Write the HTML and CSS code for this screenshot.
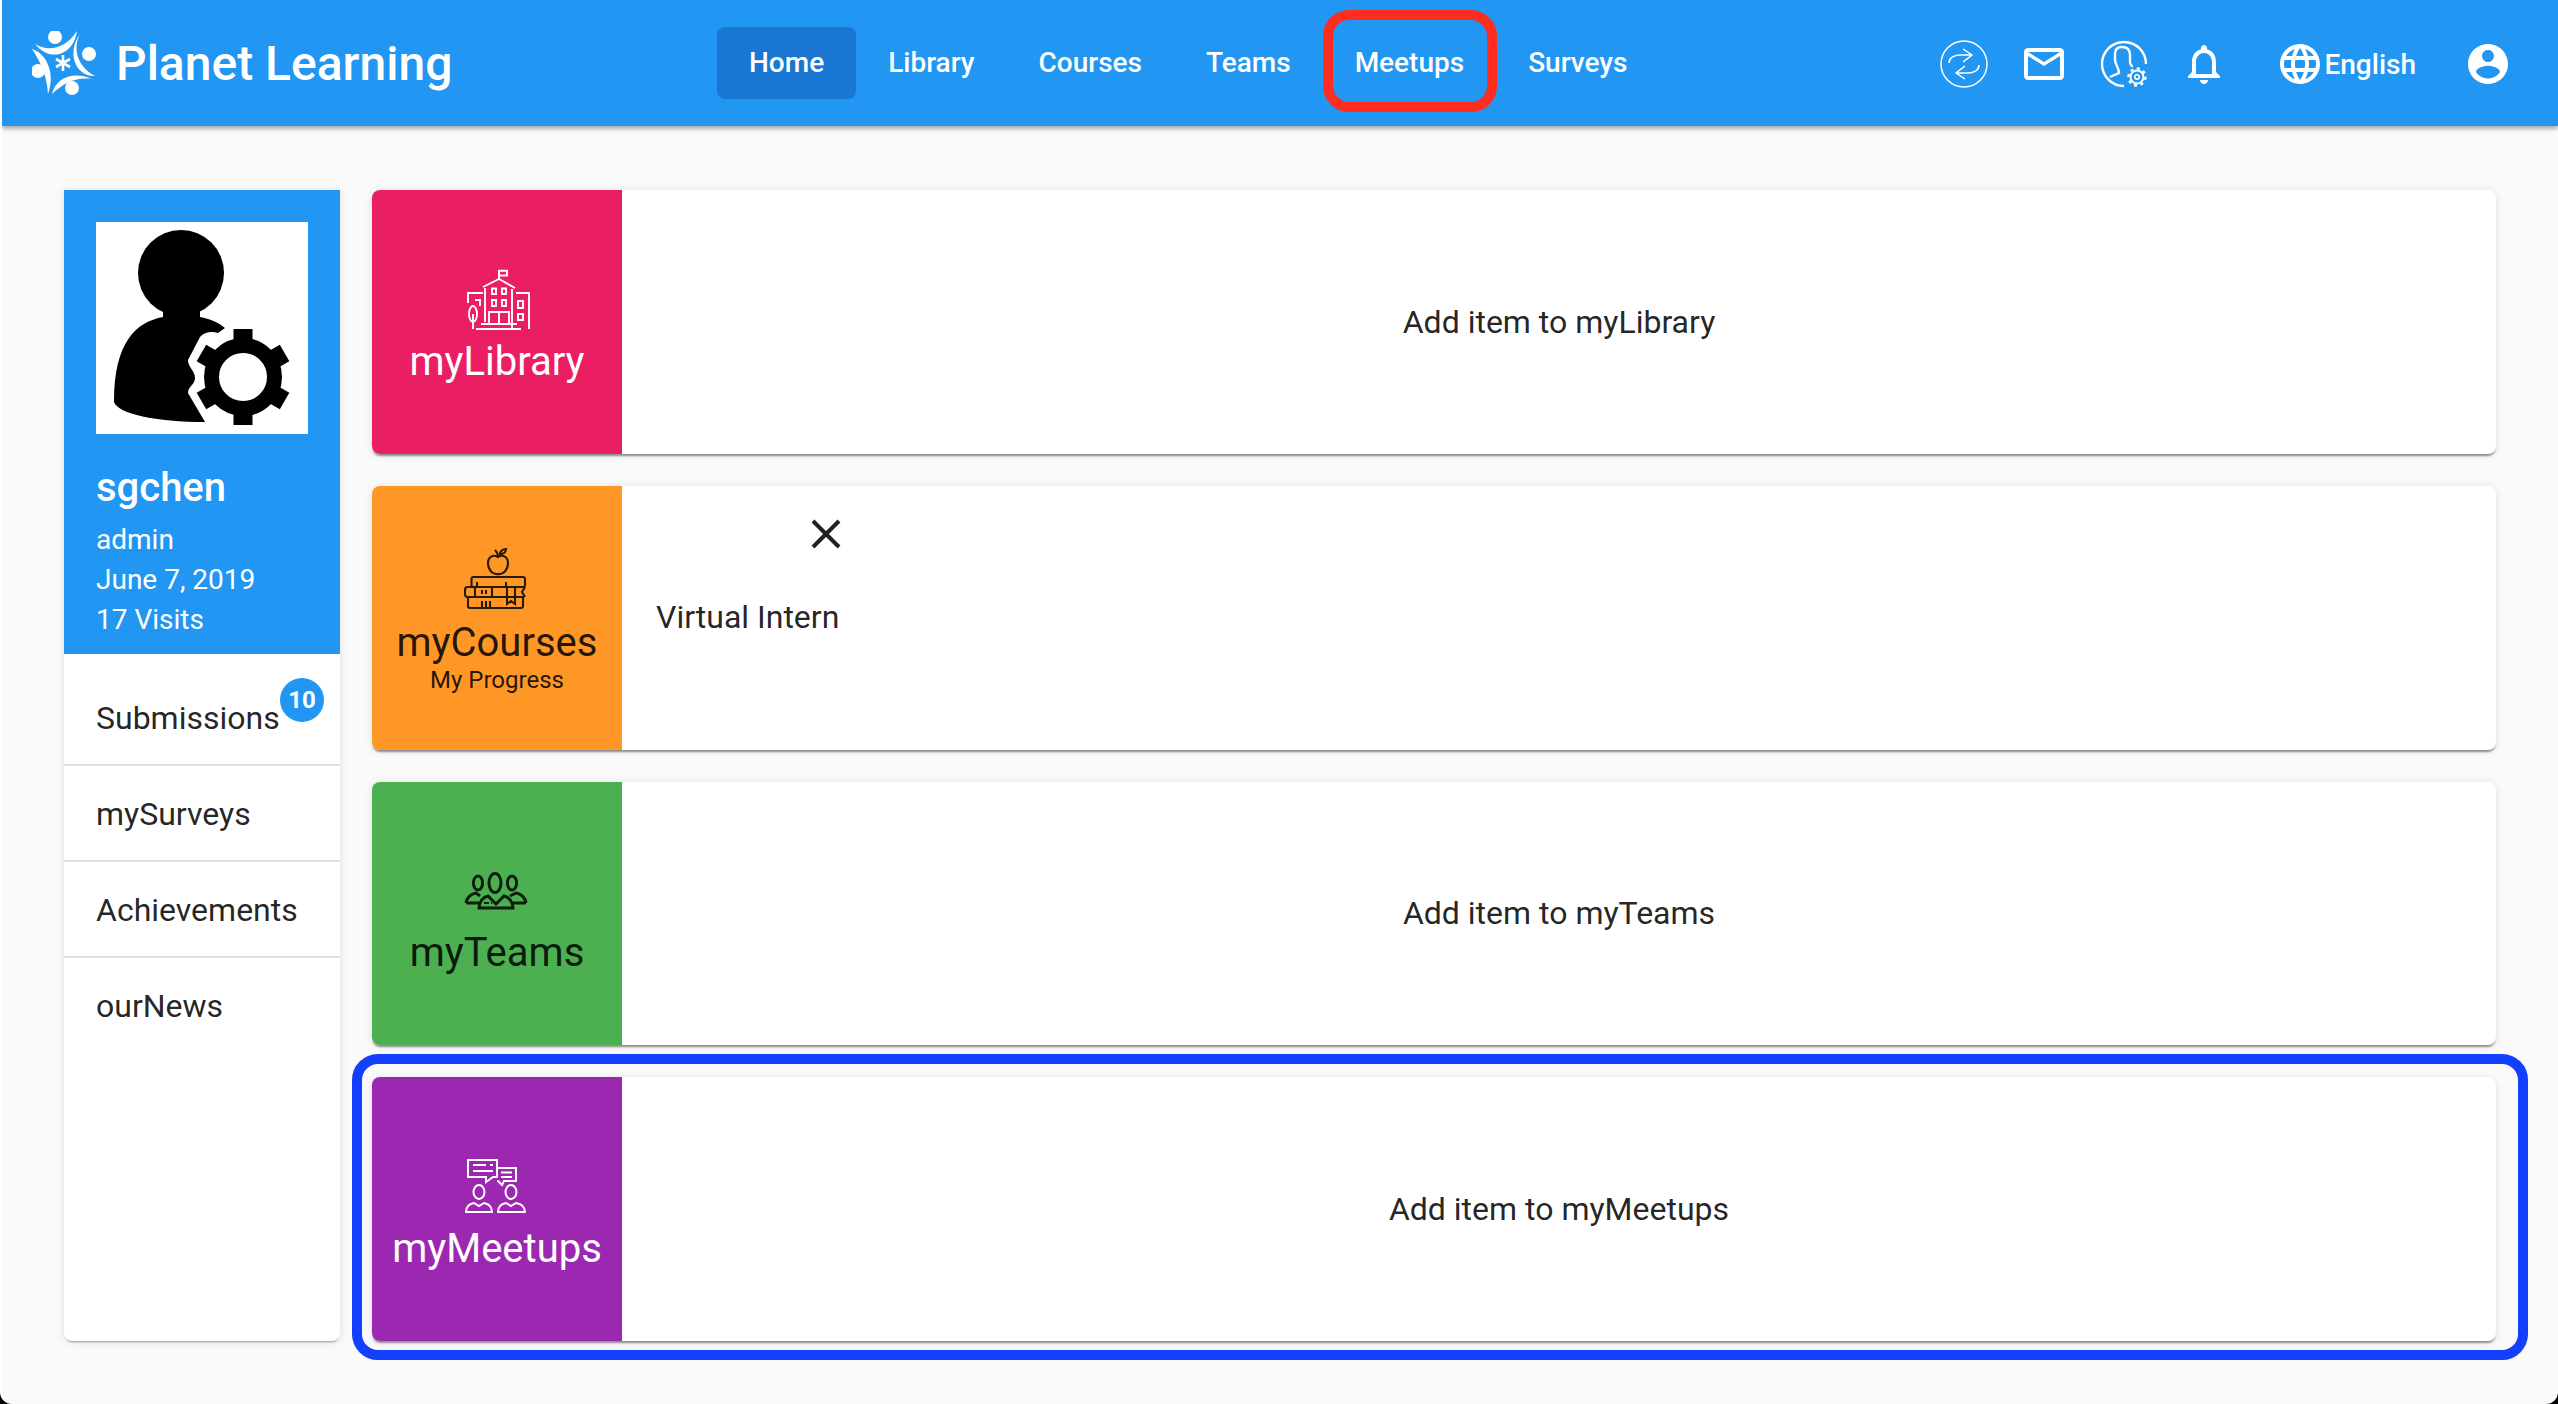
FILE: index.html
```html
<!DOCTYPE html>
<html lang="en">
<head>
  <meta charset="UTF-8">
  <title>Planet Learning</title>
  <link rel="stylesheet" href="styles.css">
</head>
<body>
<div class="page">
  <header class="toolbar">
    <div class="brand">
      <svg class="logo" viewBox="0 0 64 64" fill="#fff">
        <circle cx="23" cy="6" r="7"/><circle cx="57" cy="23" r="7"/><circle cx="6" cy="40" r="7"/><circle cx="40" cy="57" r="7"/>
        <path d="M3 13C14 20 32 20 45 0C42 24 18 32 3 13Z"/>
        <path d="M48 3C40 18 46 36 63 45C44 46 34 22 48 3Z"/>
        <path d="M20 63C24 46 42 40 60 48C44 46 32 52 20 63Z"/>
        <path d="M0 18C14 22 24 42 16 63C15 44 8 30 0 18Z"/>
        <path d="M31 24V40M24 28L38 36M24 36L38 28" stroke="#fff" stroke-width="2.6" fill="none"/>
      </svg>
      <span class="brand-name">Planet Learning</span>
    </div>
    <nav class="nav">
      <a class="nav-link active">Home</a>
      <a class="nav-link">Library</a>
      <a class="nav-link">Courses</a>
      <a class="nav-link">Teams</a>
      <a class="nav-link">Meetups</a>
      <a class="nav-link">Surveys</a>
    </nav>
    <div class="tools">
      <span class="tool">
        <svg class="tool-icon" viewBox="0 0 48 48" fill="none" stroke="#fff" stroke-width="1.5">
          <circle cx="24" cy="24" r="23"/>
          <path d="M9 23C9 18 14 15 20 15H32M23 9L32 15L23 22"/>
          <path d="M39 25C39 30 34 33 28 33H16M25 39L16 33L25 26"/>
        </svg>
      </span>
      <span class="tool">
        <svg class="tool-icon" viewBox="0 0 24 24" fill="#fff"><path d="M20 4H4c-1.1 0-2 .9-2 2v12c0 1.1.9 2 2 2h16c1.1 0 2-.9 2-2V6c0-1.1-.9-2-2-2zm0 14H4V8l8 5 8-5v10zm-8-7L4 6h16l-8 5z"/></svg>
      </span>
      <span class="tool">
        <svg class="tool-icon" viewBox="0 0 48 48" fill="none" stroke="#fff" stroke-width="2.4">
          <path d="M46 24A22 22 0 1 0 24 46"/>
          <path d="M10 37L19 33C19 28 15 24 15 20V14C15 9 18 7 22 7C27 7 30 10 30 15V22C30 25 32 25 32 27"/>
          <circle cx="37" cy="37" r="9" fill="#2196f3" stroke="none"/>
          <circle cx="37" cy="37" r="8.5" stroke-width="2.4" stroke-dasharray="3 3.6"/>
          <circle cx="37" cy="37" r="6.5" stroke-width="2"/>
          <circle cx="37" cy="37" r="2.2" stroke-width="1.6"/>
        </svg>
      </span>
      <span class="tool">
        <svg class="tool-icon" viewBox="0 0 24 24" fill="#fff"><path d="M12 22c1.1 0 2-.9 2-2h-4c0 1.1.89 2 2 2zm6-6v-5c0-3.07-1.64-5.64-4.5-6.32V4c0-.83-.67-1.5-1.5-1.5s-1.5.67-1.5 1.5v.68C7.63 5.36 6 7.92 6 11v5l-2 2v1h16v-1l-2-2zm-2 1H8v-6c0-2.48 1.51-4.5 4-4.5s4 2.02 4 4.5v6z"/></svg>
      </span>
      <span class="lang">
        <svg class="tool-icon" viewBox="0 0 24 24" fill="#fff"><path d="M11.99 2C6.47 2 2 6.48 2 12s4.47 10 9.99 10C17.52 22 22 17.52 22 12S17.52 2 11.99 2zm6.93 6h-2.95c-.32-1.25-.78-2.45-1.38-3.56 1.84.63 3.37 1.91 4.33 3.56zM12 4.04c.83 1.2 1.48 2.53 1.91 3.96h-3.82c.43-1.43 1.08-2.76 1.91-3.96zM4.26 14C4.1 13.36 4 12.69 4 12s.1-1.36.26-2h3.38c-.08.66-.14 1.32-.14 2 0 .68.06 1.34.14 2H4.26zm.82 2h2.95c.32 1.25.78 2.45 1.38 3.56-1.84-.63-3.37-1.9-4.33-3.56zm2.95-8H5.08c.96-1.66 2.49-2.93 4.33-3.56C8.81 5.55 8.35 6.75 8.03 8zM12 19.96c-.83-1.2-1.48-2.53-1.91-3.96h3.82c-.43 1.43-1.08 2.76-1.91 3.96zM14.34 14H9.66c-.09-.66-.16-1.32-.16-2 0-.68.07-1.35.16-2h4.68c.09.65.16 1.32.16 2 0 .68-.07 1.34-.16 2zm.25 5.56c.6-1.11 1.06-2.31 1.38-3.56h2.95c-.96 1.65-2.49 2.93-4.33 3.56zM16.36 14c.08-.66.14-1.32.14-2 0-.68-.06-1.34-.14-2h3.38c.16.64.26 1.31.26 2s-.1 1.36-.26 2h-3.38z"/></svg>
        <span>English</span>
      </span>
      <span class="tool">
        <svg class="tool-icon" viewBox="0 0 24 24" fill="#fff"><path d="M12 2C6.48 2 2 6.48 2 12s4.48 10 10 10 10-4.48 10-10S17.52 2 12 2zm0 3c1.66 0 3 1.34 3 3s-1.34 3-3 3-3-1.34-3-3 1.34-3 3-3zm0 14.2c-2.5 0-4.71-1.28-6-3.22.03-1.99 4-3.08 6-3.08 1.99 0 5.97 1.09 6 3.08-1.29 1.94-3.5 3.22-6 3.22z"/></svg>
      </span>
    </div>
  </header>

  <main class="content">
    <aside class="sidebar">
      <div class="profile">
        <svg class="avatar" viewBox="0 0 212 212">
          <circle cx="85" cy="51" r="43"/>
          <path d="M67 80H104V95C114 97 122 100 129 106L122 111C116 109 108 110 104 115L92 138C92 146 99 148 99 156C99 163 92 164 92 171L109 200C60 200 22 192 18 180C18 120 40 100 67 95Z"/>
          <g fill="none" stroke="#000">
            <circle cx="147" cy="155" r="31.5" stroke-width="15"/>
          </g>
          <g>
            <rect x="137.5" y="107" width="19" height="16"/>
            <rect x="137.5" y="107" width="19" height="16" transform="rotate(60 147 155)"/>
            <rect x="137.5" y="107" width="19" height="16" transform="rotate(120 147 155)"/>
            <rect x="137.5" y="107" width="19" height="16" transform="rotate(180 147 155)"/>
            <rect x="137.5" y="107" width="19" height="16" transform="rotate(240 147 155)"/>
            <rect x="137.5" y="107" width="19" height="16" transform="rotate(300 147 155)"/>
          </g>
        </svg>
        <div class="user-name">sgchen</div>
        <div class="user-info">admin</div>
        <div class="user-info">June 7, 2019</div>
        <div class="user-info">17 Visits</div>
      </div>
      <div class="side-item first">Submissions<span class="badge">10</span></div>
      <div class="side-item">mySurveys</div>
      <div class="side-item">Achievements</div>
      <div class="side-item last">ourNews</div>
    </aside>

    <section class="cards">
      <div class="card">
        <div class="panel pink">
          <svg class="panel-icon" viewBox="0 0 64 64" fill="none" stroke="#fff" stroke-width="1.9">
            <path d="M34 9V0.8H42V5.5H34M18 17L34 9L50 18M20 18V52M47 19V59M3 33V23H18M51 23H64V59"/>
            <path d="M27 18.5H31V24H27ZM37 18.5H41V24H37ZM27 30H31V36H27ZM37 30H41V36H37ZM53 31H58V38H53ZM53 44H58V50H53Z"/>
            <path d="M24 54V42H44V54M34 42V54M16 54H52M11 59H56"/>
            <ellipse cx="8" cy="44" rx="4" ry="8"/>
            <path d="M8 44V59M10 30H15V36"/>
          </svg>
          <div class="panel-title">myLibrary</div>
        </div>
        <div class="card-body center">Add item to myLibrary</div>
      </div>

      <div class="card">
        <div class="panel orange dark-text">
          <svg class="panel-icon books" viewBox="0 6 64 64" fill="none" stroke="#2a1a08" stroke-width="2.1">
            <path d="M33 12C28 9 23 12 23 18C23 25 28 30 33 29C38 30 43 25 43 18C43 12 38 9 33 12Z"/>
            <path d="M33 12C33 9 31 6 30 5M35 9C35 6 38 4 41 4C41 7 39 9 35 9Z"/>
            <rect x="6.5" y="32" width="53.5" height="10" rx="2"/>
            <path d="M56 42H2.5C1 42 0 43 0 45V49C0 51 1 52 2.5 52H56"/>
            <path d="M3 52V61C3 62 4 63 5 63H56C57 63 58 62 58 61V52H38M60 42L57 47L60 52"/>
            <path d="M42 42V59L46 56L50 59V42M12 37V42M41 37V42M10 42V52M27 42V52M17 45V49M21 45V49M17 56V63M21 56V63M25 56V63"/>
          </svg>
          <div class="panel-title">myCourses</div>
          <div class="panel-sub">My Progress</div>
        </div>
        <div class="card-body">
          <div class="course">
            <svg class="close" viewBox="0 0 48 48" fill="none" stroke="#212121" stroke-width="4"><path d="M11 11L37 37M37 11L11 37"/></svg>
            <div class="course-name">Virtual Intern</div>
          </div>
        </div>
      </div>

      <div class="card">
        <div class="panel green dark-text">
          <svg class="panel-icon" viewBox="0 0 64 64" fill="none" stroke="#0c1f0d" stroke-width="3">
            <ellipse cx="30" cy="22" rx="6" ry="9.5"/>
            <ellipse cx="13" cy="22" rx="4.6" ry="7"/>
            <ellipse cx="47" cy="22" rx="4.6" ry="7"/>
            <path d="M1 42C2 36 6 33 11 32L15 35M1 42H14M61 42C60 36 56 33 51 32L45 35M61 42H48"/>
            <path d="M14 47C14 41 18 36 23 35L31 43L39 35C44 36 48 41 48 47Z"/>
            <path d="M19 42H24M26 42H27" stroke-width="2"/>
          </svg>
          <div class="panel-title">myTeams</div>
        </div>
        <div class="card-body center">Add item to myTeams</div>
      </div>

      <div class="card">
        <div class="panel purple">
          <svg class="panel-icon" viewBox="0 0 64 64" fill="none" stroke="#fff" stroke-width="2">
            <path d="M3 3H32V20H28L21 25V20H3Z"/>
            <path d="M32 11H51V24H39L37 28L33 24H32"/>
            <path d="M8 8H21M25 8H28M8 14H28M36 15.5H47M36 20H47"/>
            <ellipse cx="14" cy="35" rx="5.5" ry="7"/>
            <ellipse cx="46" cy="35" rx="5.5" ry="7"/>
            <path d="M1 55C1 50 4 47 9 46L14 49L19 46C24 47 27 50 27 55Z"/>
            <path d="M33 55C33 50 36 47 41 46L46 49L51 46C56 47 60 50 60 55Z"/>
          </svg>
          <div class="panel-title">myMeetups</div>
        </div>
        <div class="card-body center">Add item to myMeetups</div>
      </div>
    </section>
  </main>

  <div class="mark mark-red"></div>
  <div class="mark mark-blue"></div>
</div>
</body>
</html>
```

FILE: styles.css
```css
html, body {
  margin: 0;
  height: 100%;
  background: #000;
}
.page {
  position: relative;
  width: 2558px;
  height: 1404px;
  box-sizing: border-box;
  border-left: 2px solid #fff;
  border-radius: 0 0 12px 12px;
  background: #fafafa;
  font-family: Roboto, "Liberation Sans", sans-serif;
  color: rgba(0,0,0,0.87);
  overflow: hidden;
}

/* top bar */
.toolbar {
  display: flex;
  align-items: center;
  height: 126px;
  background: #2196f3;
  color: #fff;
  box-shadow: 0 3px 4px rgba(0,0,0,0.3);
}
.brand {
  display: flex;
  align-items: center;
  width: 715px;
  padding-left: 30px;
  box-sizing: border-box;
}
.logo {
  width: 64px;
  height: 64px;
  filter: blur(0.6px);
}
.brand-name {
  margin-left: 20px;
  font-size: 48px;
  font-weight: 500;
}
.nav {
  display: flex;
}
.nav-link {
  height: 72px;
  line-height: 72px;
  padding: 0 32px;
  font-size: 28px;
  font-weight: 500;
  border-radius: 8px;
}
.nav-link.active {
  background: #1976d2;
}
.tools {
  display: flex;
  align-items: center;
  margin-left: auto;
  padding: 2px 30px 0 0;
}
.tool {
  display: flex;
  padding: 0 16px;
}
.tool-icon {
  width: 48px;
  height: 48px;
}
.lang {
  display: flex;
  align-items: center;
  padding: 0 32px;
  font-size: 28px;
  font-weight: 500;
}

/* layout */
.content {
  display: flex;
  gap: 32px;
  height: 1151px;
  padding: 64px 62px 0 62px;
}
.sidebar {
  width: 276px;
  flex: none;
  background: #fff;
  border-radius: 0 0 8px 8px;
  box-shadow: 0 3px 2px -2px rgba(0,0,0,0.35), 0 1px 8px rgba(0,0,0,0.12);
}
.profile {
  height: 464px;
  box-sizing: border-box;
  padding: 32px 32px 0;
  background: #2196f3;
  color: #fff;
}
.avatar {
  display: block;
  width: 212px;
  height: 212px;
  background: #fff;
}
.user-name {
  margin-top: 26px;
  margin-bottom: 4px;
  font-size: 40px;
  font-weight: 500;
  line-height: 56px;
}
.user-info {
  font-size: 28px;
  line-height: 40px;
}
.side-item {
  position: relative;
  padding: 32px 32px 30px;
  font-size: 32px;
  line-height: 32px;
  border-bottom: 2px solid #e0e0e0;
}
.side-item.first {
  padding-top: 48px;
}
.side-item.last {
  border-bottom: none;
}
.badge {
  position: absolute;
  top: 24px;
  right: 16px;
  width: 44px;
  height: 44px;
  line-height: 44px;
  border-radius: 50%;
  background: #2196f3;
  color: #fff;
  font-size: 24px;
  font-weight: 700;
  text-align: center;
}

/* dashboard cards */
.cards {
  flex: 1;
  display: grid;
  grid-template-rows: repeat(4, 1fr);
  gap: 32px;
}
.card {
  display: flex;
  background: #fff;
  border-radius: 8px;
  overflow: hidden;
  box-shadow: 0 3px 2px -1px rgba(0,0,0,0.4), 0 1px 8px rgba(0,0,0,0.1);
}
.panel {
  width: 250px;
  flex: none;
  display: flex;
  flex-direction: column;
  align-items: center;
  justify-content: center;
  padding-top: 16px;
  box-sizing: border-box;
  color: #fff;
}
.pink { background: #e91e63; }
.orange { background: #ff9727; }
.green { background: #4caf50; }
.purple { background: #9c27b0; }
.dark-text { color: rgba(0,0,0,0.87); }
.panel-icon {
  width: 64px;
  height: 64px;
  overflow: visible;
}
.panel-title {
  font-size: 40px;
  line-height: 56px;
}
.panel-sub {
  margin: -6px 0 6px;
  font-size: 24px;
  line-height: 30px;
}
.card-body {
  flex: 1;
  font-size: 32px;
}
.card-body.center {
  display: flex;
  align-items: center;
  justify-content: center;
}
.course {
  display: flex;
  flex-direction: column;
  align-items: flex-end;
  width: 194px;
  margin: 24px 0 0 34px;
}
.close {
  width: 48px;
  height: 48px;
}
.course-name {
  align-self: flex-start;
  margin-top: 43px;
  line-height: 32px;
  white-space: nowrap;
}

/* annotation frames drawn over the screenshot */
.mark {
  position: absolute;
  box-sizing: border-box;
  border-style: solid;
  border-width: 10px;
  border-radius: 26px;
}
.mark-red {
  left: 1321px;
  top: 10px;
  width: 174px;
  height: 102px;
  border-color: #ff2d20;
}
.mark-blue {
  left: 350px;
  top: 1054px;
  width: 2176px;
  height: 306px;
  border-color: #1340ff;
}
```
